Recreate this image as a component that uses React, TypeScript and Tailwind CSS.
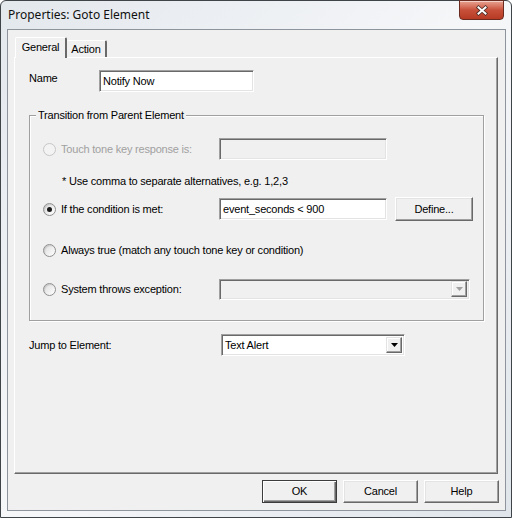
const ui = "font-['Liberation_Sans',Arial,sans-serif] text-[11px] tracking-[-0.2px] leading-none";

const sunken = 'border border-t-[#a0a0a0] border-l-[#a0a0a0] border-r-white border-b-white shadow-[inset_1px_1px_0_#696969,inset_-1px_-1px_0_#e3e3e3]';

const Radio = ({ checked, disabled }: { checked?: boolean; disabled?: boolean }) => (
  <span
    className={
      disabled
        ? 'flex h-[13px] w-[13px] shrink-0 items-center justify-center rounded-full border border-[#c6c6c6] bg-[#f3f3f3]'
        : 'flex h-[13px] w-[13px] shrink-0 items-center justify-center rounded-full border border-[#8e8f8f] bg-gradient-to-br from-[#dcdcdc] to-white shadow-[inset_1px_1px_1px_rgba(0,0,0,0.12)]'
    }
  >
    {checked && <span className="h-[5px] w-[5px] rounded-full bg-[#1a1a1a]" />}
  </span>
);

const Arrow = ({ disabled }: { disabled?: boolean }) => (
  <svg width="7" height="4" viewBox="0 0 7 4">
    <path d="M0 0H7L3.5 4Z" fill={disabled ? '#a0a0a0' : '#000'} />
  </svg>
);

const Combo = ({ value, disabled, className }: { value?: string; disabled?: boolean; className: string }) => (
  <div className={`flex items-center ${sunken} ${disabled ? 'bg-[#f0f0f0]' : 'bg-white'} ${className}`}>
    <span className="flex-1 pl-[3px] pt-[1px] text-black">{value}</span>
    <span className="mr-[2px] flex h-[16px] w-[16px] items-center justify-center border border-t-[#e3e3e3] border-l-[#e3e3e3] border-r-[#696969] border-b-[#696969] bg-[#f0f0f0] shadow-[inset_-1px_-1px_0_#a0a0a0,inset_1px_1px_0_white]">
      <Arrow disabled={disabled} />
    </span>
  </div>
);

const Button = ({ label, isDefault, className }: { label: string; isDefault?: boolean; className: string }) => (
  <div
    className={
      isDefault
        ? `flex items-center justify-center border border-[#3c3c3c] bg-[#f0f0f0] text-black shadow-[inset_1px_1px_0_white,inset_-1px_-1px_0_#696969,inset_-2px_-2px_0_#a0a0a0] ${className}`
        : `flex items-center justify-center border border-t-white border-l-white border-r-[#696969] border-b-[#696969] bg-[#f0f0f0] text-black shadow-[inset_-1px_-1px_0_#a0a0a0,inset_1px_1px_0_#e3e3e3] ${className}`
    }
  >
    {label}
  </div>
);

export default function App() {
  return (
    <div className="h-[518px] w-[512px] overflow-hidden bg-white">
      <div className="flex h-[518px] w-[512px] flex-col rounded-t-[6px] border border-[#3f4449] bg-gradient-to-br from-[#e3e8ed] via-[#f6f7f9] to-[#dfe5ea]">
        {/* title bar */}
        <div className="flex h-[28px] items-start">
          <span className="mt-[6px] pl-[7px] font-['Noto_Sans',sans-serif] text-[12px] leading-[16px] text-[#111]">
            Properties: Goto Element
          </span>
          <div className="ml-auto mr-[7px] -mt-px flex h-[20px] w-[45px] items-center justify-center rounded-b-[4px] border border-[#6b2a20] bg-gradient-to-b from-[#e8a393] via-[#c8503a] to-[#b73a23] shadow-[inset_0_1px_0_rgba(255,255,255,0.5)]">
            <svg width="14" height="11" viewBox="0 0 14 11">
              <path d="M3.5 2.5L10.5 8.5M10.5 2.5L3.5 8.5" stroke="#4a2a24" strokeWidth="3.6" strokeLinecap="square" />
              <path d="M3.5 2.5L10.5 8.5M10.5 2.5L3.5 8.5" stroke="#fff" strokeWidth="2" strokeLinecap="square" />
            </svg>
          </div>
        </div>

        {/* client area */}
        <div className={`ml-[6px] flex h-[482px] w-[499px] flex-col border border-[#8d949b] bg-[#f0f0f0] ${ui}`}>
          {/* tabs */}
          <div className="flex h-[27px] items-end pt-[7px] pl-[7px]">
            <div className="relative z-10 -mb-px flex h-[21px] w-[52px] items-start justify-center rounded-t-[2px] border-t border-l border-t-white border-l-white border-r-2 border-r-[#696969] bg-[#f0f0f0] pt-[4px] text-black">
              General
            </div>
            <div className="flex h-[17px] w-[40px] items-start justify-center rounded-t-[2px] border-t border-t-white border-r-2 border-r-[#696969] pt-[3px] text-black">
              Action
            </div>
          </div>

          {/* tab panel */}
          <div className="ml-[6px] flex h-[417px] w-[484px] flex-col border border-t-white border-l-white border-r-[#696969] border-b-[#696969] pt-[12px] pl-[14px] shadow-[inset_-1px_-1px_0_#a0a0a0]">
            {/* name */}
            <div className="flex h-[22px] items-start">
              <span className="mt-[3px] w-[70px] text-black">Name</span>
              <div className={`flex h-[22px] w-[155px] items-center bg-white pl-[3px] text-black ${sunken}`}>Notify Now</div>
            </div>

            {/* group */}
            <div className="relative mt-[23px] flex w-[455px] flex-col border border-[#a0a0a0] pl-[13px] pt-[22px] pb-[20px] shadow-[inset_1px_1px_0_white,1px_1px_0_white]">
              <span className="absolute -top-[6px] left-[6px] bg-[#f0f0f0] px-[2px] text-black">Transition from Parent Element</span>

              <div className="flex h-[22px] items-center">
                <div className="flex w-[176px] items-center gap-[5px] text-[#a0a0a0]">
                  <Radio disabled />
                  <span>Touch tone key response is:</span>
                </div>
                <div className={`h-[22px] w-[168px] bg-[#f0f0f0] ${sunken}`} />
              </div>

              <div className="mt-[10px] flex h-[22px] items-center pl-[19px] text-black">
                * Use comma to separate alternatives, e.g. 1,2,3
              </div>

              <div className="mt-[4px] flex h-[26px] items-center">
                <div className="flex w-[176px] items-center gap-[5px] text-black">
                  <Radio checked />
                  <span>If the condition is met:</span>
                </div>
                <div className={`flex h-[22px] w-[168px] items-center bg-white pl-[3px] text-black ${sunken}`}>event_seconds &lt; 900</div>
                <Button label="Define..." className="ml-[8px] h-[24px] w-[78px]" />
              </div>

              <div className="mt-[17px] flex h-[22px] items-center gap-[5px] text-black">
                <Radio />
                <span>Always true (match any touch tone key or condition)</span>
              </div>

              <div className="mt-[17px] flex h-[22px] items-center">
                <div className="flex w-[176px] items-center gap-[5px] text-black">
                  <Radio />
                  <span>System throws exception:</span>
                </div>
                <Combo disabled className="h-[21px] w-[251px]" />
              </div>
            </div>

            {/* jump */}
            <div className="mt-[13px] flex h-[22px] items-center">
              <span className="w-[192px] text-black">Jump to Element:</span>
              <Combo value="Text Alert" className="h-[22px] w-[184px]" />
            </div>
          </div>

          {/* dialog buttons */}
          <div className="mt-[6px] flex justify-end gap-[6px] pr-[6px]">
            <Button label="OK" isDefault className="h-[23px] w-[75px]" />
            <Button label="Cancel" className="h-[23px] w-[75px]" />
            <Button label="Help" className="h-[23px] w-[75px]" />
          </div>
        </div>
      </div>
    </div>
  );
}
